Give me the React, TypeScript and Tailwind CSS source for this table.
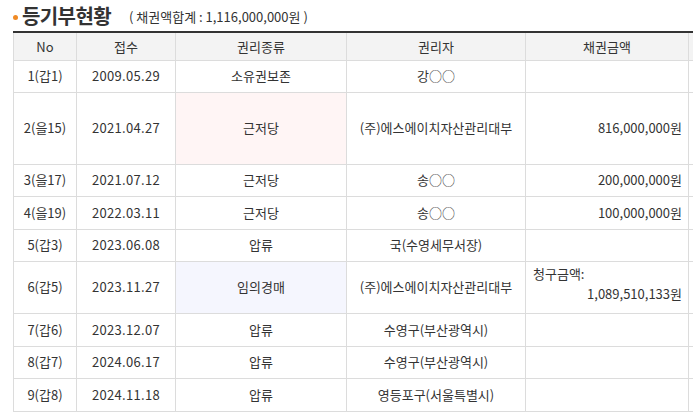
const rows = [
  { no: "1(갑1)", date: "2009.05.29", kind: "소유권보존", holder: "강○○", amount: "", h: "h-[32px]" },
  { no: "2(을15)", date: "2021.04.27", kind: "근저당", holder: "(주)에스에이치자산관리대부", amount: "816,000,000원", h: "h-[72px]", tint: "bg-[#fff5f5]" },
  { no: "3(을17)", date: "2021.07.12", kind: "근저당", holder: "송○○", amount: "200,000,000원", h: "h-[32px]" },
  { no: "4(을19)", date: "2022.03.11", kind: "근저당", holder: "송○○", amount: "100,000,000원", h: "h-[33px]" },
  { no: "5(갑3)", date: "2023.06.08", kind: "압류", holder: "국(수영세무서장)", amount: "", h: "h-[32px]" },
  { no: "6(갑5)", date: "2023.11.27", kind: "임의경매", holder: "(주)에스에이치자산관리대부", amount: "claim", h: "h-[52px]", tint: "bg-[#f5f6fe]" },
  { no: "7(갑6)", date: "2023.12.07", kind: "압류", holder: "수영구(부산광역시)", amount: "", h: "h-[33px]" },
  { no: "8(갑7)", date: "2024.06.17", kind: "압류", holder: "수영구(부산광역시)", amount: "", h: "h-[32px]" },
  { no: "9(갑8)", date: "2024.11.18", kind: "압류", holder: "영등포구(서울특별시)", amount: "", h: "h-[33px]" },
];

export default function App() {
  return (
    <div
      className="w-[693px] h-[415px] overflow-hidden bg-white text-[#333]"
      style={{ fontFamily: '"Noto Sans CJK KR", "Noto Sans", sans-serif' }}
    >
      <div className="flex items-center h-[31px] pl-[13px]">
        <span className="w-[5px] h-[5px] rounded-full bg-[#f08a24] mr-[4px] mt-[3px]" />
        <h2 className="text-[20px] font-bold leading-none tracking-[-0.6px] text-[#333]">등기부현황</h2>
        <span className="ml-[18px] mt-[3px] text-[13px] text-[#333]">( 채권액합계 : 1,116,000,000원 )</span>
      </div>
      <table className="ml-[13px] w-[780px] table-fixed border-collapse text-[13px] border-t-2 border-t-[#333]">
        <colgroup>
          <col className="w-[63px]" />
          <col className="w-[99px]" />
          <col className="w-[171px]" />
          <col className="w-[179px]" />
          <col className="w-[163px]" />
          <col />
        </colgroup>
        <thead>
          <tr className="h-[28px] bg-[#f3f3f3]">
            {["No", "접수", "권리종류", "권리자", "채권금액", ""].map((t, i) => (
              <th key={i} className="border border-[#dcdcdc] border-t-[#333] font-normal text-center">
                {t}
              </th>
            ))}
          </tr>
        </thead>
        <tbody>
          {rows.map((r) => (
            <tr key={r.no} className={r.h}>
              <td className="border border-[#dcdcdc] text-center">{r.no}</td>
              <td className="border border-[#dcdcdc] text-center tracking-[0.3px]">{r.date}</td>
              <td className={`border border-[#dcdcdc] text-center ${r.tint ?? ""}`}>{r.kind}</td>
              <td className="border border-[#dcdcdc] text-center">{r.holder}</td>
              <td className="border border-[#dcdcdc] text-right pr-[6px]">
                {r.amount === "claim" ? (
                  <div className="flex flex-col leading-[20px] pl-[1px]">
                    <span className="text-left pl-[6px] -mt-[6px]">청구금액:</span>
                    <span>1,089,510,133원</span>
                  </div>
                ) : (
                  r.amount
                )}
              </td>
              <td className="border border-[#dcdcdc]" />
            </tr>
          ))}
        </tbody>
      </table>
    </div>
  );
}
